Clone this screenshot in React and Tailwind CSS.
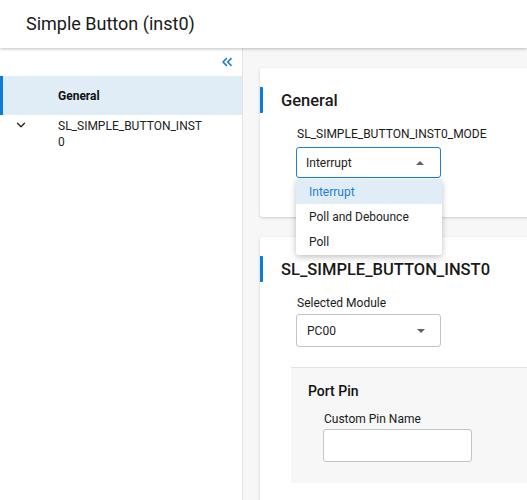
import React from "react";
import { ChevronsLeft, ChevronDown } from "lucide-react";

function Caret({ up }) {
  return (
    <svg width="8" height="4" viewBox="0 0 8 4" className="text-[#5f6368]">
      {up ? <path d="M0 4 L4 0 L8 4 Z" fill="currentColor" /> : <path d="M0 0 L8 0 L4 4 Z" fill="currentColor" />}
    </svg>
  );
}

function CardHeader({ title }) {
  return (
    <div className="flex items-center h-[26px]">
      <div className="w-[3px] h-[26px] bg-[#0b7dd6] rounded-r-[1px]" />
      <div className="ml-[18px] mt-[2px] text-[16.5px] leading-[20px] font-medium text-[#1a1a1a]">{title}</div>
    </div>
  );
}

export default function App() {
  return (
    <div className="w-[527px] h-[500px] overflow-hidden flex flex-col bg-white" style={{ fontFamily: "Roboto, 'Liberation Sans', sans-serif" }}>
      <header className="relative z-10 h-[48px] shrink-0 bg-white shadow-[0_1px_3px_rgba(0,0,0,0.25)] flex items-center pl-[26px]">
        <h1 className="text-[18px] leading-[22px] text-[#1a1a1a]">Simple Button (inst0)</h1>
      </header>
      <div className="flex flex-1 min-h-0">
        <aside className="w-[243px] shrink-0 bg-white border-r border-[#e3e3e3] flex flex-col">
          <div className="h-[28px] flex items-center justify-end pr-[7px]">
            <ChevronsLeft size={16} strokeWidth={2.5} className="text-[#1d7fd6]" />
          </div>
          <div className="h-[39px] flex items-center bg-[#e0edf6]">
            <div className="w-[3px] h-full bg-[#0b7dd6]" />
            <span className="ml-[55px] text-[12px] font-bold text-[#111]">General</span>
          </div>
          <div className="flex items-start pt-[3px]">
            <ChevronDown size={14} strokeWidth={2.2} className="ml-[14px] text-[#222]" />
            <span className="ml-[30px] w-[148px] break-all text-[12px] leading-[16px] text-[#222]">SL_SIMPLE_BUTTON_INST0</span>
          </div>
        </aside>
        <main className="flex-1 min-w-0 overflow-hidden bg-[#f7f7f7] pl-[17px] pt-[20px]">
          <section className="relative z-20 w-[320px] bg-white rounded-[3px] shadow-[0_1px_3px_rgba(0,0,0,0.18)] pt-[19px] pb-[39px]">
            <CardHeader title="General" />
            <div className="ml-[37px] mt-[13px] text-[12px] leading-[16px] text-[#1a1a1a]">SL_SIMPLE_BUTTON_INST0_MODE</div>
            <div className="relative ml-[36px] mt-[5px] w-[145px]">
              <div className="h-[31px] border-[1.5px] border-[#1d7fd6] rounded-[3px] flex items-center justify-between pl-[9px] pr-[16px] text-[12px] text-[#222]">
                <span>Interrupt</span>
                <Caret up />
              </div>
              <div className="absolute left-0 top-[32px] w-[146px] bg-white rounded-[3px] shadow-[0_2px_6px_rgba(0,0,0,0.25)] text-[12px]">
                <div className="h-[25px] flex items-center pl-[13px] bg-[#e0edf6] text-[#1d7fd6]">Interrupt</div>
                <div className="h-[25px] flex items-center pl-[13px] text-[#222]">Poll and Debounce</div>
                <div className="h-[26px] flex items-center pl-[13px] text-[#222]">Poll</div>
              </div>
            </div>
          </section>
          <section className="mt-[20px] w-[320px] h-[300px] bg-white rounded-[3px] shadow-[0_1px_3px_rgba(0,0,0,0.18)] pt-[19px]">
            <CardHeader title="SL_SIMPLE_BUTTON_INST0" />
            <div className="ml-[37px] mt-[13px] text-[12px] leading-[16px] text-[#1a1a1a]">Selected Module</div>
            <div className="ml-[36px] mt-[3px] w-[145px] h-[33px] border border-[#c4c4c4] rounded-[3px] flex items-center justify-between pl-[10px] pr-[15px] text-[12px] text-[#222]">
              <span>PC00</span>
              <Caret />
            </div>
            <div className="ml-[31px] mt-[20px] h-[116px] bg-[#f7f7f7] border-t border-[#e3e3e3] pl-[17px] pt-[13px]">
              <div className="text-[14px] leading-[20px] font-medium text-[#111]">Port Pin</div>
              <div className="ml-[16px] mt-[10px] text-[12px] leading-[16px] text-[#1a1a1a]">Custom Pin Name</div>
              <div className="ml-[15px] mt-[2px] w-[149px] h-[33px] bg-white border border-[#c4c4c4] rounded-[3px]" />
            </div>
          </section>
        </main>
      </div>
    </div>
  );
}
